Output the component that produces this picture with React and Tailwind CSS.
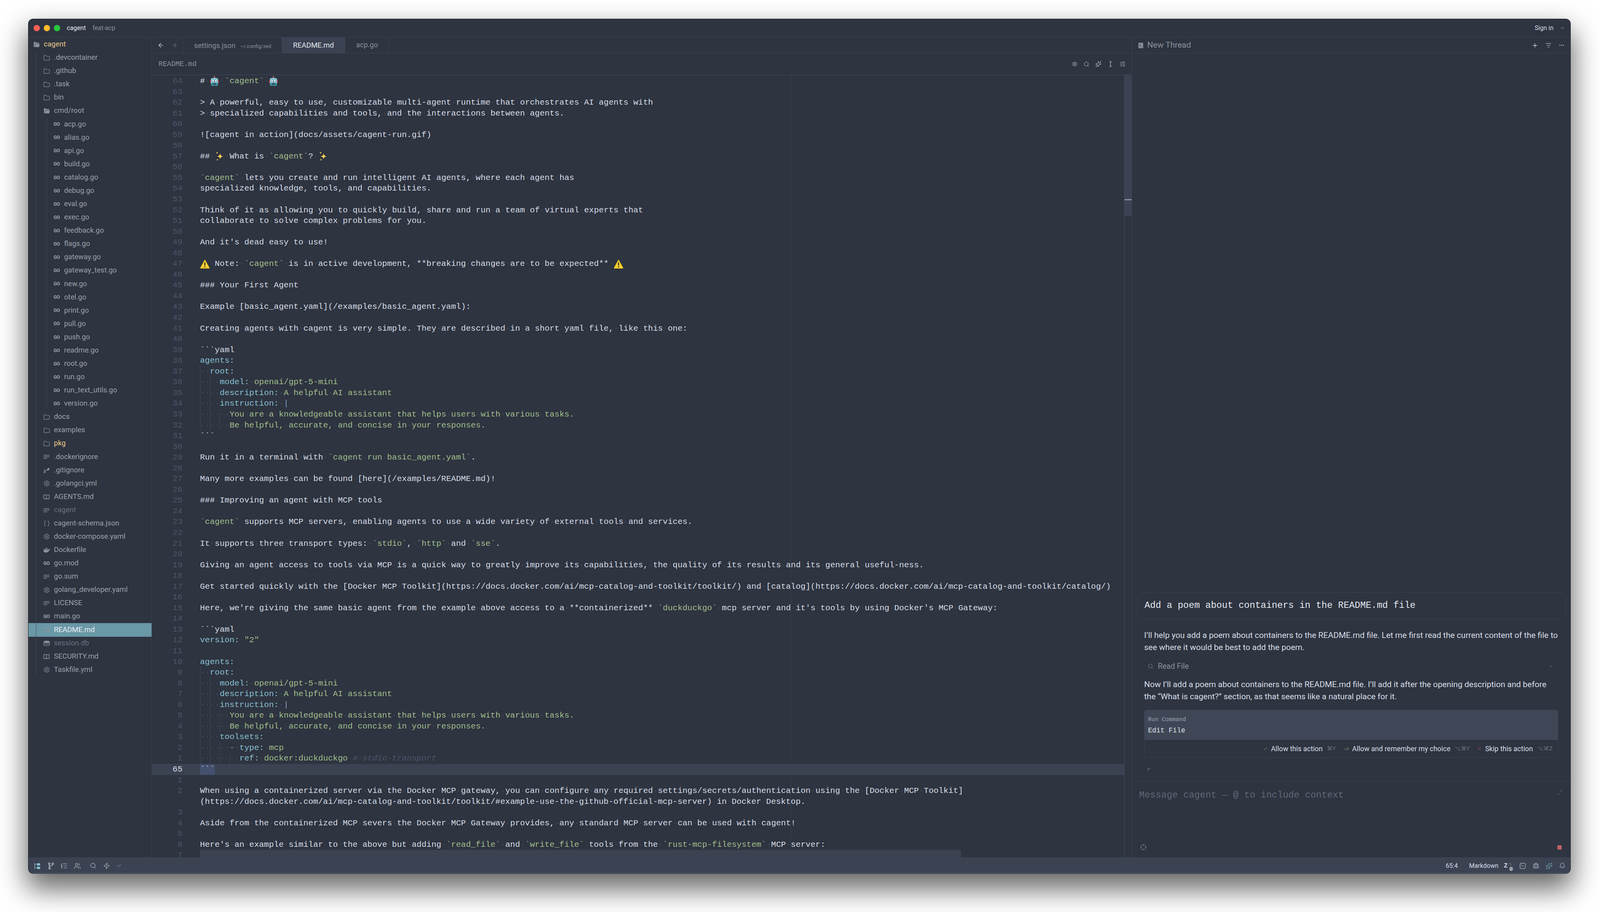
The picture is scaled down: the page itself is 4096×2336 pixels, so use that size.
import React from "react";
import { ArrowLeft, ArrowRight, Bell, Braces, Bug, Check, CheckCheck, ChevronDown, Crosshair, Ellipsis, Eye, Folder, ListFilter, ListTree, Maximize2, Plus, Search, Settings, SlidersHorizontal, Sparkles, SquareTerminal, TextCursor, Users, X, Zap } from "lucide-react";
import { FaDocker } from "react-icons/fa6";

const KEY = "text-[#88c0d0]";
const STR = "text-[#a3be8c]";
const COM = "text-[#4c566a] italic";

/* ---------- small drawn icons ---------- */
const FolderOpenIcon = () => (
  <svg viewBox="0 0 18 18" className="w-[18px] h-[18px]" fill="#8e93a0">
    <path d="M1.5 4a1.5 1.5 0 0 1 1.5-1.5h3l1.5 1.8h6A1.5 1.5 0 0 1 15 5.8V7H5L3.4 15.5H3A1.5 1.5 0 0 1 1.5 14z" />
    <path d="M5.5 8h11L15 15.5H4z" />
  </svg>
);
const LinesIcon = () => (
  <svg viewBox="0 0 16 16" className="w-[16px] h-[16px]" stroke="#8e93a0" strokeWidth="1.3" fill="none">
    <path d="M0.5 4h15M0.5 8h15M0.5 12h9" />
  </svg>
);
const BookIcon = () => (
  <svg viewBox="0 0 16 16" className="w-[16px] h-[16px]" stroke="#8e93a0" strokeWidth="1.5" fill="none">
    <path d="M8 3.5C6.5 2.6 3 2.5 1 2.8v10c2-.3 5.5-.2 7 .7 1.5-.9 5-1 7-.7v-10c-2-.3-5.5-.2-7 .7zM8 3.5v10" />
  </svg>
);
const GitIcon = () => (
  <svg viewBox="0 0 16 16" className="w-[16px] h-[16px]" stroke="#8e93a0" strokeWidth="1.3" fill="none">
    <circle cx="3.2" cy="12.5" r="2" />
    <path d="M3.2 10.5V4M3.5 10c1-2 5-1 7.5-3" />
    <path d="M10 5.5c0-2 2-3 5-3 0 3-1.5 5-3.5 5-1 0-1.5-1-1.5-2z" fill="#8e93a0" />
  </svg>
);
const DbIcon = () => (
  <svg viewBox="0 0 18 16" className="w-[17px] h-[16px]" stroke="#8e93a0" strokeWidth="1.3" fill="none">
    <ellipse cx="9" cy="4" rx="7.8" ry="2.6" fill="#8e93a0" />
    <path d="M1.2 4v8c0 1.4 3.5 2.6 7.8 2.6s7.8-1.2 7.8-2.6V4M1.2 8c0 1.4 3.5 2.6 7.8 2.6S16.8 9.4 16.8 8" />
  </svg>
);
const GoIcon = () => (
  <span className="text-[12.5px] leading-none font-black tracking-[-0.5px] text-[#8e93a0]">GO</span>
);
const Robot = () => (
  <svg viewBox="0 0 24 28" className="w-[24px] h-[28px] block">
    <rect x="11" y="1" width="2" height="4" fill="#e89b2c" />
    <rect x="9.5" y="4" width="5" height="3" fill="#6b5a9a" />
    <rect x="1" y="10" width="3" height="9" rx="1" fill="#b83a3a" />
    <rect x="20" y="10" width="3" height="9" rx="1" fill="#b83a3a" />
    <rect x="3" y="6" width="18" height="20" rx="4" fill="#8fd3de" />
    <rect x="3" y="18" width="18" height="8" rx="3" fill="#3d8a9a" />
    <circle cx="8.5" cy="13" r="3" fill="#eaf7fa" stroke="#2a6a88" />
    <circle cx="15.5" cy="13" r="3" fill="#eaf7fa" stroke="#2a6a88" />
    <path d="M12 14l1.5 3h-3z" fill="#d84a4a" />
    <rect x="8.5" y="20" width="7" height="3" rx="1" fill="#1f3a44" />
  </svg>
);
const Sparkle = () => (
  <svg viewBox="0 0 26 28" className="w-[25px] h-[27px] block" fill="#fcd34d">
    <path d="M14 6c.8 5 2.5 7 8 8-5.500 1-7.200 3-8 8-.8-5-2.500-7-8-8 5.500-1 7.200-3 8-8z" />
    <path d="M6 1c.3 2 1 3 3 3.400-2 .4-2.700 1.400-3 3.400-.3-2-1-3-3-3.400 2-.4 2.700-1.400 3-3.400z" />
    <path d="M7 20c.3 1.800 1 2.600 2.800 3-1.800.4-2.500 1.200-2.800 3-.3-1.800-1-2.600-2.800-3 1.800-.4 2.500-1.200 2.800-3z" />
  </svg>
);
const Warn = () => (
  <svg viewBox="0 0 26 28" className="w-[25px] h-[27px] block">
    <path d="M13 3.500L25 25a1 1 0 0 1-1 1.200H2a1 1 0 0 1-1-1.200z" fill="#fbcf33" stroke="#f5c518" strokeLinejoin="round" />
    <rect x="11.700" y="10" width="2.600" height="9" rx="1" fill="#222" />
    <circle cx="13" cy="22" r="1.600" fill="#222" />
  </svg>
);

/* ---------- editor text ---------- */
function Spaced({ text, cls }) {
  return text.split(/( )/).map((p, i) =>
    p === " " ? <span key={i} className="text-[#434c5e]">·</span> : p ? <span key={i} className={cls}>{p}</span> : null
  );
}
function Md({ text }) {
  if (text.startsWith("```")) return <Spaced text={text} />;
  return text.split(/(`[^`]+`|🤖|✨|⚠)/u).map((p, i) => {
    if (p === "🤖") return <span key={i} className="inline-block w-[25.2px] h-[27px] align-top"><Robot /></span>;
    if (p === "✨") return <span key={i} className="inline-block w-[25.2px] h-[27px] align-top"><Sparkle /></span>;
    if (p === "⚠") return <span key={i} className="inline-block w-[25.2px] h-[27px] align-top"><Warn /></span>;
    if (p.startsWith("`")) return <Spaced key={i} text={p} cls={STR} />;
    return <Spaced key={i} text={p} />;
  });
}

const m = (n, t) => ({ n, t });
const y = (n, ind, key, val, g, extra) => ({ n, ind, key, val, g, extra });
const s = (n, ind, str, g) => ({ n, ind, str, g });

const LINES = [
  m(64, "# 🤖 `cagent` 🤖"), m(63, ""),
  m(62, "> A powerful, easy to use, customizable multi-agent runtime that orchestrates AI agents with"),
  m(61, "> specialized capabilities and tools, and the interactions between agents."), m(60, ""),
  m(59, "![cagent in action](docs/assets/cagent-run.gif)"), m(58, ""),
  m(57, "## ✨ What is `cagent`? ✨"), m(56, ""),
  m(55, "`cagent` lets you create and run intelligent AI agents, where each agent has"),
  m(54, "specialized knowledge, tools, and capabilities."), m(53, ""),
  m(52, "Think of it as allowing you to quickly build, share and run a team of virtual experts that"),
  m(51, "collaborate to solve complex problems for you."), m(50, ""),
  m(49, "And it's dead easy to use!"), m(48, ""),
  m(47, "⚠ Note: `cagent` is in active development, **breaking changes are to be expected** ⚠"), m(46, ""),
  m(45, "### Your First Agent"), m(44, ""),
  m(43, "Example [basic_agent.yaml](/examples/basic_agent.yaml):"), m(42, ""),
  m(41, "Creating agents with cagent is very simple. They are described in a short yaml file, like this one:"), m(40, ""),
  m(39, "```yaml"),
  y(38, "", "agents:", "", []),
  y(37, "  ", "root:", "", [0]),
  y(36, "    ", "model:", "openai/gpt-5-mini", [0, 2]),
  y(35, "    ", "description:", "A helpful AI assistant", [0, 2]),
  y(34, "    ", "instruction:", "", [0, 2], "|"),
  s(33, "      ", "You are a knowledgeable assistant that helps users with various tasks.", [0, 2, 4]),
  s(32, "      ", "Be helpful, accurate, and concise in your responses.", [0, 2, 4]),
  m(31, "```"), m(30, ""),
  m(29, "Run it in a terminal with `cagent run basic_agent.yaml`."), m(28, ""),
  m(27, "Many more examples can be found [here](/examples/README.md)!"), m(26, ""),
  m(25, "### Improving an agent with MCP tools"), m(24, ""),
  m(23, "`cagent` supports MCP servers, enabling agents to use a wide variety of external tools and services."), m(22, ""),
  m(21, "It supports three transport types: `stdio`, `http` and `sse`."), m(20, ""),
  m(19, "Giving an agent access to tools via MCP is a quick way to greatly improve its capabilities, the quality of its results and its general useful-ness."), m(18, ""),
  m(17, "Get started quickly with the [Docker MCP Toolkit](https://docs.docker.com/ai/mcp-catalog-and-toolkit/toolkit/) and [catalog](https://docs.docker.com/ai/mcp-catalog-and-toolkit/catalog/)"), m(16, ""),
  m(15, "Here, we're giving the same basic agent from the example above access to a **containerized** `duckduckgo` mcp server and it's tools by using Docker's MCP Gateway:"), m(14, ""),
  m(13, "```yaml"),
  y(12, "", "version:", "\"2\"", []), m(11, ""),
  y(10, "", "agents:", "", []),
  y(9, "  ", "root:", "", [0]),
  y(8, "    ", "model:", "openai/gpt-5-mini", [0, 2]),
  y(7, "    ", "description:", "A helpful AI assistant", [0, 2]),
  y(6, "    ", "instruction:", "", [0, 2], "|"),
  s(5, "      ", "You are a knowledgeable assistant that helps users with various tasks.", [0, 2, 4]),
  s(4, "      ", "Be helpful, accurate, and concise in your responses.", [0, 2, 4]),
  y(3, "    ", "toolsets:", "", [0, 2]),
  { n: 2, ind: "      ", dash: true, key: "type:", val: "mcp", g: [0, 2, 4] },
  { n: 1, ind: "        ", key: "ref:", val: "docker:duckduckgo", g: [0, 2, 4, 6], comment: "# stdio transport" },
  { n: 65, t: "```", active: true },
  m(1, ""),
  m(2, "When using a containerized server via the Docker MCP gateway, you can configure any required settings/secrets/authentication using the [Docker MCP Toolkit]"),
  m("", "(https://docs.docker.com/ai/mcp-catalog-and-toolkit/toolkit/#example-use-the-github-official-mcp-server) in Docker Desktop."),
  m(3, ""),
  m(4, "Aside from the containerized MCP severs the Docker MCP Gateway provides, any standard MCP server can be used with cagent!"), m(5, ""),
  m(6, "Here's an example similar to the above but adding `read_file` and `write_file` tools from the `rust-mcp-filesystem` MCP server:"), m(7, ""),
];

function EditorLine({ line }) {
  return (
    <div className={`flex h-[27.55px] leading-[27.55px] ${line.active ? "bg-[#3b4252]" : ""}`}>
      <div className={`w-[78px] shrink-0 text-right ${line.active ? "text-[#d8dee9]" : "text-[#4c566a]"}`}>{line.n}</div>
      <div className="w-[45px] shrink-0" />
      <div className="relative flex-1 whitespace-pre text-[#d8dee9]">
        {line.g?.map((c) => (
          <span key={c} className="absolute top-0 bottom-0 w-px bg-[#434c5e]" style={{ left: c * 12.6 }} />
        ))}
        {line.active && <span className="absolute left-0 top-0 bottom-0 w-[38px] bg-[#48597a]/70" />}
        <span className="relative">
          {line.t !== undefined && <Md text={line.t} />}
          {line.ind && <Spaced text={line.ind} />}
          {line.dash && <><span className="text-[#81a1c1]">-</span><Spaced text=" " /></>}
          {line.key && <span className={KEY}>{line.key}</span>}
          {line.val && <><Spaced text=" " /><Spaced text={line.val} cls={STR} /></>}
          {line.extra && <><Spaced text=" " /><span className="text-[#81a1c1]">{line.extra}</span></>}
          {line.str && <Spaced text={line.str} cls={STR} />}
          {line.comment && <><Spaced text=" " /><Spaced text={line.comment} cls={COM} /></>}
        </span>
      </div>
    </div>
  );
}

/* ---------- sidebar ---------- */
const ICONS = {
  folder: <Folder size={17} strokeWidth={1.6} color="#8e93a0" />,
  open: <FolderOpenIcon />,
  go: <GoIcon />,
  text: <LinesIcon />,
  git: <GitIcon />,
  gear: <Settings size={17} strokeWidth={1.6} color="#8e93a0" />,
  book: <BookIcon />,
  json: <Braces size={17} strokeWidth={1.6} color="#8e93a0" />,
  docker: <FaDocker size={18} color="#8e93a0" />,
  db: <DbIcon />,
};
const PAD = { 0: "pl-[12px]", 1: "pl-[38px]", 2: "pl-[64px]" };

function Row({ name, icon, depth = 1, tone, selected }) {
  return (
    <div className={`flex items-center h-[34.09px] ${PAD[depth]} text-[18.6px] ${selected ? "bg-[#6a98a6] text-[#eceff4]" : tone || "text-[#9ca1ab]"}`}>
      <span className="w-[27px] shrink-0 flex items-center">{ICONS[icon]}</span>
      <span className="whitespace-nowrap">{name}</span>
    </div>
  );
}
const GO_FILES = ["acp.go", "alias.go", "api.go", "build.go", "catalog.go", "debug.go", "eval.go", "exec.go", "feedback.go", "flags.go", "gateway.go", "gateway_test.go", "new.go", "otel.go", "print.go", "pull.go", "push.go", "readme.go", "root.go", "run.go", "run_text_utils.go", "version.go"];
const Guide = ({ cls }) => <span className={`absolute top-[4px] bottom-[5px] w-px bg-[#434c5e] z-10 ${cls}`} />;

function Sidebar() {
  return (
    <aside className="w-[315px] shrink-0 pt-[1px] border-r border-[#3b4252] box-content">
      <Row name="cagent" icon="open" depth={0} tone="text-[#ebcb8b]" />
      <div className="relative">
        <Guide cls="left-[19px]" />
        {[".devcontainer", ".github", ".task", "bin"].map((n) => <Row key={n} name={n} icon="folder" />)}
        <Row name="cmd/root" icon="open" />
        <div className="relative">
          <Guide cls="left-[46px]" />
          {GO_FILES.map((n) => <Row key={n} name={n} icon="go" depth={2} />)}
        </div>
        <Row name="docs" icon="folder" />
        <Row name="examples" icon="folder" />
        <Row name="pkg" icon="folder" tone="text-[#ebcb8b]" />
        <Row name=".dockerignore" icon="text" />
        <Row name=".gitignore" icon="git" />
        <Row name=".golangci.yml" icon="gear" />
        <Row name="AGENTS.md" icon="book" />
        <Row name="cagent" icon="text" tone="text-[#6a7180]" />
        <Row name="cagent-schema.json" icon="json" />
        <Row name="docker-compose.yaml" icon="gear" />
        <Row name="Dockerfile" icon="docker" />
        <Row name="go.mod" icon="go" />
        <Row name="go.sum" icon="text" />
        <Row name="golang_developer.yaml" icon="gear" />
        <Row name="LICENSE" icon="text" />
        <Row name="main.go" icon="go" />
        <Row name="README.md" icon="book" selected />
        <Row name="session.db" icon="db" tone="text-[#6a7180]" />
        <Row name="SECURITY.md" icon="book" />
        <Row name="Taskfile.yml" icon="gear" />
      </div>
    </aside>
  );
}

/* ---------- status bar ---------- */
const ProjectIcon = () => (
  <svg viewBox="0 0 18 18" className="w-[18px] h-[18px]" fill="none" stroke="#88c0d0" strokeWidth="1.3">
    <path d="M2 1v16M2 5h3M2 14h3" />
    <rect x="7" y="2" width="9" height="6" rx="2" fill="#88c0d0" stroke="none" />
    <rect x="7" y="11" width="9" height="6" rx="2" fill="#88c0d0" stroke="none" />
  </svg>
);
const BranchIcon = () => (
  <svg viewBox="0 0 18 18" className="w-[18px] h-[18px]" fill="none" stroke="#d8dee9" strokeWidth="1.3">
    <circle cx="5" cy="3" r="1.900" />
    <circle cx="14" cy="3" r="1.900" />
    <circle cx="6" cy="15" r="1.900" />
    <path d="M5 5v8M14 5c0 4-5 3-8.500 5" />
  </svg>
);
const EditPrediction = () => (
  <span className="relative flex items-center w-[24px] h-[20px] font-bold text-[15px] text-[#d8dee9] leading-none">
    Z
    <svg viewBox="0 0 10 10" className="absolute left-[10px] top-[2px] w-[10px] h-[10px]" fill="none" stroke="#d8dee9" strokeWidth="1.2" strokeDasharray="2 1.500">
      <path d="M1 6c1 0 2 1 2 2M5 1c2 1 3 3 3 5" />
    </svg>
    <span className="absolute left-[14px] top-[12px] w-[9px] h-[11px] rounded-full bg-[#9a9fa9]" />
  </span>
);

function StatusBar() {
  return (
    <footer className="h-[41px] shrink-0 bg-[#3b4252] pt-[3px] border-b border-[#5c6474] flex items-center text-[#d8dee9] text-[16px]">
      <div className="flex items-center pl-[14px]">
        <span className="w-[34px]"><ProjectIcon /></span>
        <span className="w-[34px]"><BranchIcon /></span>
        <span className="w-[34px]"><ListTree size={18} strokeWidth={1.3} /></span>
        <span className="w-[41px]"><Users size={18} strokeWidth={1.3} /></span>
        <span className="w-[34px]"><Search size={17} strokeWidth={1.4} /></span>
        <span className="w-[34px]"><Zap size={18} strokeWidth={1.3} /></span>
        <span><Check size={13} strokeWidth={1.3} /></span>
      </div>
      <div className="ml-auto flex items-center pr-[12px]">
        <span className="mr-[29px]">65:4</span>
        <span className="mr-[14px]">Markdown</span>
        <span className="mr-[15px]"><EditPrediction /></span>
        <SquareTerminal size={18} strokeWidth={1.3} className="mr-[16px]" />
        <Bug size={18} strokeWidth={1.3} className="mr-[16px]" />
        <Sparkles size={18} strokeWidth={1.3} color="#88c0d0" className="mr-[16px]" />
        <Bell size={17} strokeWidth={1.3} />
      </div>
    </footer>
  );
}

/* ---------- right panel ---------- */
const ThreadIcon = () => (
  <svg viewBox="0 0 14 16" className="w-[13px] h-[15px]">
    <rect x="0.500" y="0.500" width="13" height="15" rx="1.500" fill="#8a8f99" />
    <path d="M4 5l2.500 2.500L4 10M7 11h3" stroke="#2e3440" strokeWidth="1.200" fill="none" />
  </svg>
);

function Keys({ children }) {
  return <span className="ml-[11px] text-[14px] text-[#6f7685] font-['DejaVu_Sans',sans-serif]">{children}</span>;
}

function ThreadPanel() {
  return (
    <section className="flex-1 min-w-0 flex flex-col border-l border-[#3b4252]">
      <div className="h-[41px] shrink-0 flex items-center pl-[16px] pr-[14px] border-b border-[#3b4252] text-[#8c919c] text-[21px]">
        <ThreadIcon />
        <span className="ml-[10px]">New Thread</span>
        <div className="ml-auto flex items-center gap-[18px] text-[#d8dee9]">
          <Plus size={17} strokeWidth={1.8} />
          <ListFilter size={16} strokeWidth={1.6} />
          <Ellipsis size={16} strokeWidth={1.6} />
        </div>
      </div>

      <div className="flex-1 min-h-0 flex flex-col justify-end px-[13px]">
        <div className="h-[68px] mr-[-1px] flex items-center px-[18px] rounded-[8px] border border-[#3b4252] font-['Liberation_Mono',monospace] text-[23.6px] text-[#e5e9f0] whitespace-pre">
          Add a poem about containers in the README.md file
        </div>
        <p className="mt-[27px] mx-[18px] text-[21px] leading-[31px] text-[#d8dee9]">
          I’ll help you add a poem about containers to the README.md file. Let me first read the current content of the file to see where it would be best to add the poem.
        </p>
        <div className="mt-[17px] h-[31px] mx-[18px] flex items-center pl-[9px] pr-[11px] text-[19.5px] text-[#8c919c]">
          <Search size={15} strokeWidth={1.5} />
          <span className="ml-[11px]">Read File</span>
          <ChevronDown size={15} strokeWidth={1.5} className="ml-auto" />
        </div>
        <p className="mt-[16px] mx-[18px] text-[21px] leading-[31px] text-[#d8dee9]">
          Now I’ll add a poem about containers to the README.md file. I’ll add it after the opening description and before the “What is cagent?” section, as that seems like a natural place for it.
        </p>
        <div className="mt-[18px] mx-[18px] rounded-[6px] border border-[#3b4252] overflow-hidden">
          <div className="h-[76px] bg-[#3f4757] pl-[9px] flex flex-col justify-center gap-[8px] font-['Liberation_Mono',monospace] whitespace-pre">
            <div className="text-[14.700px] leading-[20px] text-[#9ca1ab]">Run Command</div>
            <div className="text-[17.600px] leading-[20px] text-[#e5e9f0]">Edit File</div>
          </div>
          <div className="h-[45px] flex items-center justify-end pr-[13px] text-[18px] text-[#d8dee9]">
            <Check size={13} strokeWidth={1.5} color="#a3be8c" />
            <span className="ml-[8px]">Allow this action</span>
            <Keys>⌘Y</Keys>
            <CheckCheck size={15} strokeWidth={1.5} color="#a3be8c" className="ml-[20px]" />
            <span className="ml-[7px]">Allow and remember my choice</span>
            <Keys>⌥⌘Y</Keys>
            <X size={13} strokeWidth={1.5} color="#bf616a" className="ml-[18px]" />
            <span className="ml-[8px]">Skip this action</span>
            <Keys>⌥⌘Z</Keys>
          </div>
        </div>
        <div className="h-[60px] flex items-center pl-[27px]">
          <span className="flex gap-[2px]">
            <span className="flex flex-col gap-[2px]"><i className="w-[2px] h-[2px] bg-[#8c919c]" /><i className="w-[2px] h-[2px] bg-[#8c919c]" /></span>
            <i className="w-[2px] h-[2px] bg-[#8c919c]" />
          </span>
        </div>
      </div>

      <div className="h-[195px] shrink-0 border-t border-[#3b4252] flex flex-col pl-[18px] pr-[22px] pt-[21px] pb-[18px]">
        <div className="flex items-start justify-between">
          <span className="font-['Liberation_Mono',monospace] text-[23.6px] leading-[28px] text-[#616878] whitespace-pre">Message cagent — @ to include context</span>
          <Maximize2 size={14} strokeWidth={1.4} color="#616878" className="mr-[-2px]" />
        </div>
        <div className="mt-auto flex items-center justify-between pr-0">
          <Crosshair size={16} strokeWidth={1.3} color="#9ca1ab" className="ml-[3px]" />
          <span className="w-[11px] h-[11px] rounded-[1px] bg-[#bf616a]" />
        </div>
      </div>
    </section>
  );
}

/* ---------- centre pane ---------- */
function Tabs() {
  return (
    <div className="h-[41px] shrink-0 flex border-b border-[#3b4252] text-[18.5px]">
      <div className="w-[80px] flex items-center border-r border-[#3b4252] pl-[14px] gap-[16px]">
        <ArrowLeft size={18} strokeWidth={1.5} color="#e5e9f0" />
        <ArrowRight size={18} strokeWidth={1.5} color="#6a7180" />
      </div>
      <div className="w-[252px] flex items-baseline pl-[28px] pt-[8px] text-[#8c919c]">
        settings.json
        <span className="ml-[12px] text-[13px]">~/.config/zed</span>
      </div>
      <div className="w-[163px] h-[41px] bg-[#3b4252] flex items-center justify-center text-[#e5e9f0]">README.md</div>
      <div className="w-[112px] flex items-center justify-center border-r border-[#3b4252] text-[#8c919c]">acp.go</div>
    </div>
  );
}

function Editor() {
  return (
    <div className="relative flex-1 min-h-0 flex overflow-hidden">
      <span className="absolute left-[1635px] top-0 bottom-0 w-px bg-[#3b4252]" />
      <div className="relative flex-1 min-w-0 pt-[2px] font-['Liberation_Mono',monospace] text-[21px]">
        {LINES.map((l, i) => <EditorLine key={i} line={l} />)}
        <span className="absolute left-[123px] bottom-0 w-[1948px] h-[19px] bg-[#3b4252]" />
      </div>
      <div className="w-[19px] shrink-0 border-l border-[#434c5e] relative">
        <div className="h-[362px] bg-[#3b4252] relative">
          <span className="absolute left-0 right-0 top-[318px] h-[3px] bg-[#8a919f]" />
        </div>
      </div>
    </div>
  );
}

export default function App() {
  return (
    <div className="w-[4096px] h-[2336px] bg-white overflow-hidden pl-[73px] pt-[49px] font-['Roboto','DejaVu_Sans',sans-serif]">
      <div className="w-[3947px] h-[2188px] flex flex-col rounded-[12px] bg-[#2e3440] overflow-hidden shadow-[0_0_0_1px_#1d2028,0_34px_70px_6px_rgba(0,0,0,0.6)]">
        <header className="h-[47px] shrink-0 flex items-center border-b border-[#3b4252] pr-[13px] text-[16px]">
          <span className="ml-[13px] w-[16px] h-[16px] rounded-full bg-[#ff5f57]" />
          <span className="ml-[10px] w-[16px] h-[16px] rounded-full bg-[#febc2e]" />
          <span className="ml-[10px] w-[16px] h-[16px] rounded-full bg-[#28c840]" />
          <span className="ml-[17px] text-[#e5e9f0]">cagent</span>
          <span className="ml-[17px] text-[#8c919c]">feat-acp</span>
          <span className="ml-auto text-[#d8dee9]">Sign in</span>
          <ChevronDown size={14} strokeWidth={1.5} color="#d8dee9" className="ml-[16px]" />
        </header>
        <div className="flex-1 min-h-0 flex">
          <Sidebar />
          <main className="w-[2508px] shrink-0 flex flex-col">
            <Tabs />
            <div className="h-[55px] shrink-0 flex items-center justify-between pl-[17px] pr-[15px] border-b border-[#434c5e]">
              <span className="font-['Liberation_Mono',monospace] text-[18px] text-[#8c919c]">README.md</span>
              <div className="flex items-center gap-[15px] text-[#d8dee9]">
                <Eye size={16} strokeWidth={1.4} />
                <Search size={15} strokeWidth={1.4} />
                <Sparkles size={16} strokeWidth={1.4} />
                <TextCursor size={16} strokeWidth={1.4} />
                <SlidersHorizontal size={16} strokeWidth={1.4} />
              </div>
            </div>
            <Editor />
          </main>
          <ThreadPanel />
        </div>
        <StatusBar />
      </div>
    </div>
  );
}
